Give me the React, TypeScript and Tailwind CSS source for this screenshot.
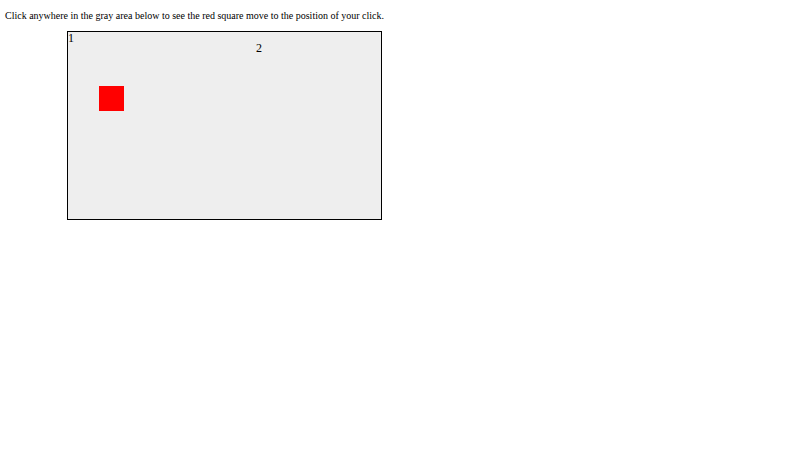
import React, { useState } from 'react';

export default function App() {
  const [pos, setPos] = useState({ x: 31, y: 54 });

  const handleClick = (e: React.MouseEvent<HTMLDivElement>) => {
    const rect = e.currentTarget.getBoundingClientRect();
    setPos({ x: e.clientX - rect.left, y: e.clientY - rect.top });
  };

  return (
    <div className="min-h-[450px] bg-white text-black font-['Liberation_Serif',serif]">
      <p className="pl-[5px] pt-[8px] text-[10px] leading-[15px]">
        Click anywhere in the gray area below to see the red square move to the position of your click.
      </p>
      <div
        onClick={handleClick}
        className="relative ml-[67px] mt-[8px] h-[189px] w-[315px] border border-black bg-[#eeeeee] text-[12px] leading-[12px]"
      >
        <span className="block">1</span>
        <span className="absolute left-[188px] top-[10px]">2</span>
        <div
          className="absolute h-[25px] w-[25px] bg-[#ff0000]"
          style={{ left: pos.x, top: pos.y }}
        />
      </div>
    </div>
  );
}
